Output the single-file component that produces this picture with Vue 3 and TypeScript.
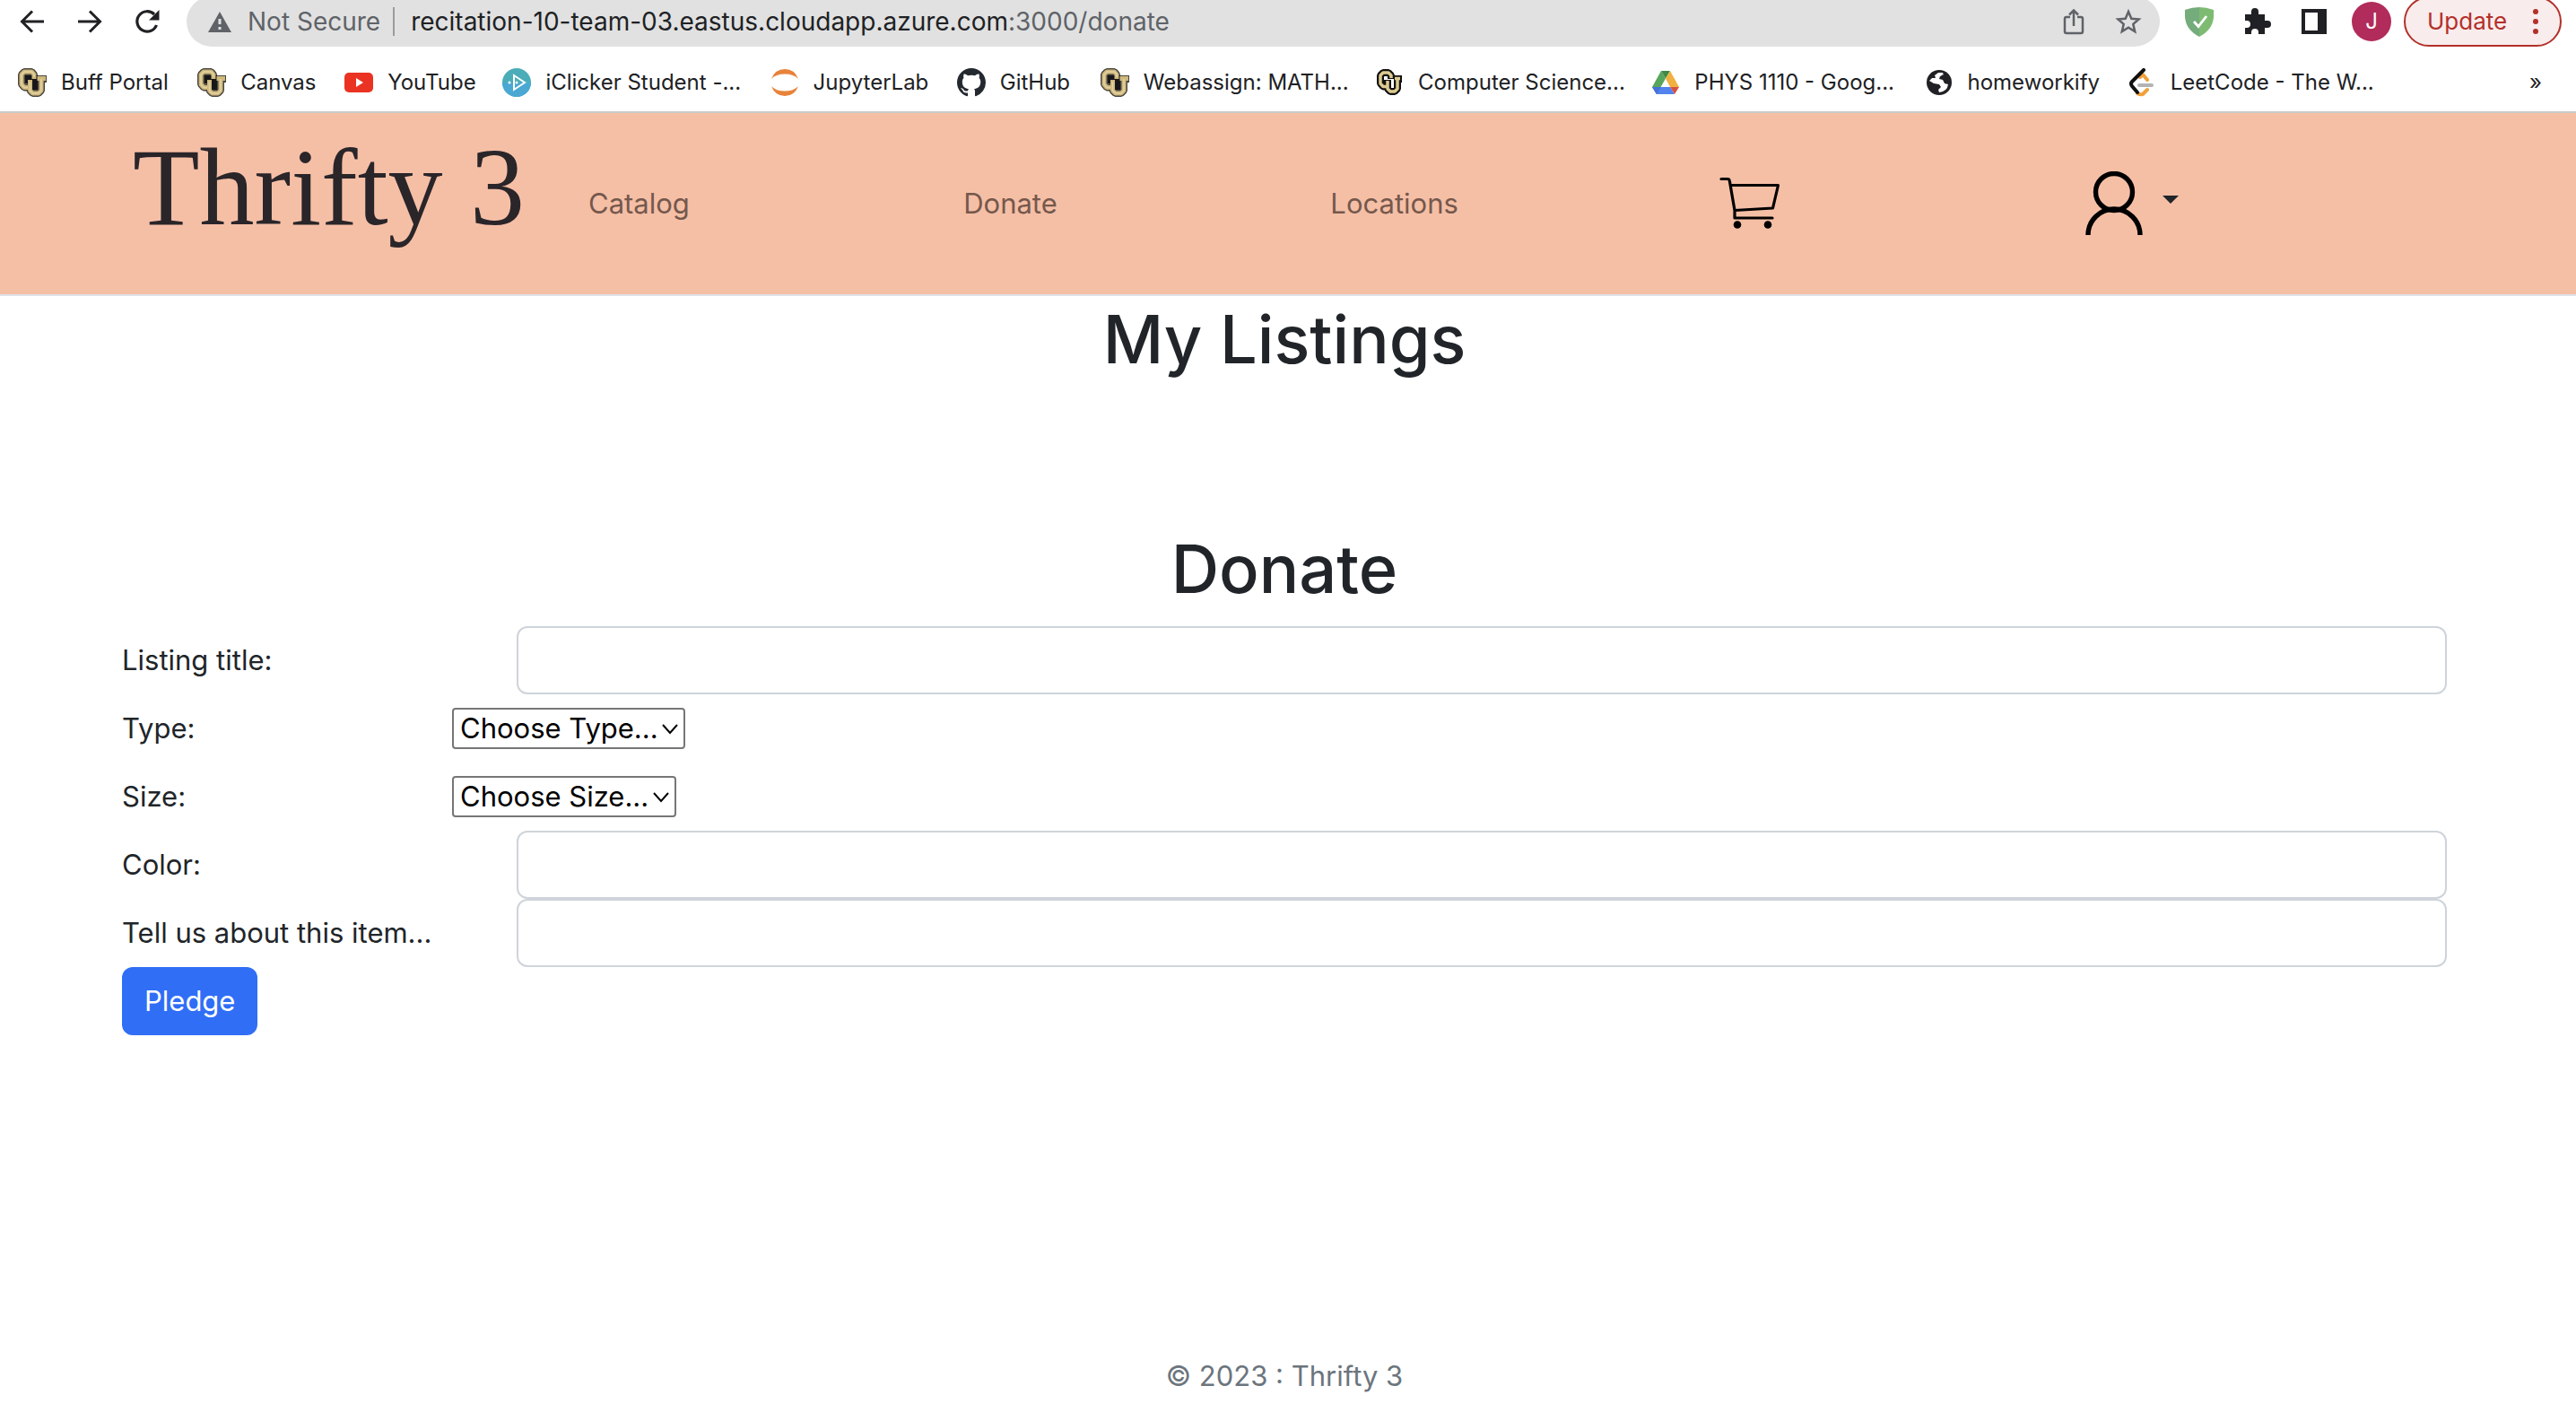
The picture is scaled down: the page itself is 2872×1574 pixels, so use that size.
<script setup lang="ts">
import { ref } from 'vue'

interface Bookmark {
  icon: string
  label: string
  span: number
}

const bookmarks: Bookmark[] = [
  { icon: 'cu', label: 'Buff Portal', span: 200 },
  { icon: 'cu', label: 'Canvas', span: 164 },
  { icon: 'youtube', label: 'YouTube', span: 176 },
  { icon: 'iclicker', label: 'iClicker Student -...', span: 298 },
  { icon: 'jupyter', label: 'JupyterLab', span: 208 },
  { icon: 'github', label: 'GitHub', span: 160 },
  { icon: 'cu', label: 'Webassign: MATH...', span: 306 },
  { icon: 'cu-dark', label: 'Computer Science...', span: 308 },
  { icon: 'drive', label: 'PHYS 1110 - Goog...', span: 304 },
  { icon: 'globe', label: 'homeworkify', span: 226 },
  { icon: 'leetcode', label: 'LeetCode - The W...', span: 448 },
]
const bookmarkColumns = bookmarks.map((b) => `${b.span}fr`).join(' ')

const title = ref('')
const type = ref('')
const size = ref('')
const color = ref('')
const about = ref('')
</script>

<template>
  <div class="window">
    <div class="toolbar">
      <div class="history">
        <button type="button" aria-label="Back">
          <svg width="28" height="28" viewBox="0 0 28 28" fill="none" stroke="#202124" stroke-width="3"><path d="M27 14H3M14 2.500L2.500 14L14 25.500" /></svg>
        </button>
        <button type="button" aria-label="Forward">
          <svg width="28" height="28" viewBox="0 0 28 28" fill="none" stroke="#202124" stroke-width="3"><path d="M1 14H25M14 2.500L25.500 14L14 25.500" /></svg>
        </button>
        <button type="button" aria-label="Reload">
          <svg width="28" height="28" viewBox="0 0 28 28"><path d="M24.500 18A11.200 11.200 0 1 1 22 6" fill="none" stroke="#202124" stroke-width="3.200" /><path d="M27.500 1V12.500H16Z" fill="#202124" /></svg>
        </button>
      </div>
      <div class="address">
        <svg class="warn" width="26" height="24" viewBox="0 0 26 24"><path d="M13 1L26 24H0Z" fill="#5f6368" /><path d="M13 9V15M13 18V21" stroke="#e1e1e1" stroke-width="3" /></svg>
        <span class="insecure">Not Secure</span>
        <span class="rule"></span>
        <span class="url">recitation-10-team-03.eastus.cloudapp.azure.com<span class="path">:3000/donate</span></span>
        <button type="button" aria-label="Share" class="share">
          <svg width="24" height="30" viewBox="0 0 24 30" fill="none" stroke="#5f6368" stroke-width="2.500"><path d="M8 10H4Q2 10 2 12V26Q2 28 4 28H20Q22 28 22 26V12Q22 10 20 10H16M12 20V3M7 7.500L12 2.500L17 7.500" /></svg>
        </button>
        <button type="button" aria-label="Bookmark this page">
          <svg width="30" height="30" viewBox="0 0 30 30" fill="none" stroke="#5f6368" stroke-width="2.500"><path d="M15 4L18.300 11.700L26.600 12.400L20.300 17.900L22.200 26.100L15 21.700L7.800 26.100L9.700 17.900L3.400 12.400L11.700 11.700Z" /></svg>
        </button>
      </div>
      <div class="extensions">
        <svg width="32" height="34" viewBox="0 0 32 34"><path d="M16 1Q8 1 0 4V12Q1 26 16 34Z" fill="#74ac7c" /><path d="M16 1Q24 1 32 4V12Q31 26 16 34Z" fill="#7dbb72" /><path d="M10 17L15 22.500L24 11" fill="none" stroke="#fff" stroke-width="2.800" /></svg>
        <svg width="30" height="30" viewBox="0 0 30 30"><path d="M2 7H8V4A4 4 0 0 1 16 4V7H23V14H26A4 4 0 0 1 26 22H23V29H16V27A4 4 0 0 0 8 27V29H1V22H3A4 4 0 0 0 3 14H1V7Z" fill="#202124" /></svg>
        <svg width="28" height="28" viewBox="0 0 28 28"><path d="M0 0H28V28H0ZM4 4V24H18V4Z" fill="#202124" fill-rule="evenodd" /></svg>
      </div>
      <button type="button" class="avatar" aria-label="Profile J">J</button>
      <button type="button" class="update">
        <span>Update</span>
        <svg width="6" height="28" viewBox="0 0 6 28" fill="#b3302a"><circle cx="3" cy="3" r="3" /><circle cx="3" cy="14" r="3" /><circle cx="3" cy="25" r="3" /></svg>
      </button>
    </div>

    <div class="bookmarks">
      <nav class="bookmark-list" :style="{ gridTemplateColumns: bookmarkColumns }" aria-label="Bookmarks">
        <a v-for="b in bookmarks" :key="b.label" href="#">
          <svg width="32" height="32" viewBox="0 0 32 32">
            <g v-if="b.icon === 'cu'" fill="none" stroke-linejoin="bevel">
              <path d="M18 13V7L15.500 4H7L4 7V18L7 21.500H13" stroke="#4a463e" stroke-width="8" />
              <path d="M13.500 12V25L16.500 28H23L26 25V8M10 12H17M20 12H32" stroke="#4a463e" stroke-width="8" />
              <path d="M8 8H22V24H15V17H8Z" fill="#17171a" />
              <path d="M18 12V7L15.500 4H7L4 7V18L7 21.500H12" stroke="#cfb87c" stroke-width="5" />
              <path d="M13.500 13V25L16.500 28H23L26 25V11M21.500 11.500H31" stroke="#cfb87c" stroke-width="5" />
              <path d="M18 10V7L15.500 4H7L4 7V18L7 21.500H11M13.500 15V25L16.500 28H23L26 25V12" stroke="#e2d3a4" stroke-width="1.500" />
            </g>
            <g v-else-if="b.icon === 'cu-dark'" fill="none" stroke-linejoin="bevel">
              <path d="M18 12V8L15 5H9L6 8V17L9 20.500H14M14 13V23L17 26H22L25 23V9M21 12H30" stroke="#111" stroke-width="8" />
              <path d="M18 11V8L15 5H9L6 8V17L9 20.500H13M14 14V23L17 26H22L25 23V12M22 11.500H28" stroke="#dcca90" stroke-width="3.500" />
            </g>
            <g v-else-if="b.icon === 'youtube'">
              <rect y="5" width="32" height="22" rx="5" fill="#ea3323" /><path d="M13 11V21L21 16Z" fill="#fff" />
            </g>
            <g v-else-if="b.icon === 'iclicker'">
              <circle cx="16" cy="16" r="16" fill="#4badb8" /><path d="M0 16A16 16 0 0 0 32 16Z" fill="#4aa8d3" />
              <path d="M13 8V24L25 16Z" fill="none" stroke="#fff" stroke-width="2" /><circle cx="8" cy="16" r="1.500" fill="#fff" /><circle cx="16" cy="16" r="1.500" fill="#fff" />
            </g>
            <g v-else-if="b.icon === 'jupyter'" fill="#e8833a">
              <path d="M1 12Q5 1 16 1T31 12Q26 6.500 16 6.500T1 12Z" /><path d="M1 20Q5 31 16 31T31 20Q26 25.500 16 25.500T1 20Z" />
            </g>
            <path v-else-if="b.icon === 'github'" fill="#24292f" transform="scale(2)" d="M8 0C3.580 0 0 3.580 0 8c0 3.540 2.290 6.530 5.470 7.590.4.070.55-.17.55-.38 0-.19-.01-.82-.01-1.490-2.010.37-2.530-.49-2.690-.94-.09-.23-.48-.94-.82-1.130-.28-.15-.68-.52-.01-.53.63-.01 1.080.58 1.230.82.72 1.210 1.870.87 2.330.66.07-.52.28-.87.51-1.070-1.780-.2-3.640-.89-3.640-3.950 0-.87.31-1.590.82-2.150-.08-.2-.36-1.020.08-2.120 0 0 .67-.21 2.200.82.64-.18 1.320-.27 2-.27s1.360.09 2 .27c1.530-1.040 2.200-.82 2.200-.82.44 1.100.16 1.920.08 2.120.51.56.82 1.270.82 2.150 0 3.070-1.870 3.750-3.650 3.950.29.25.54.73.54 1.480 0 1.070-.01 1.930-.01 2.200 0 .21.15.46.55.38A8.010 8.010 0 0 0 16 8c0-4.420-3.580-8-8-8z" />
            <g v-else-if="b.icon === 'drive'">
              <path d="M11 3L16 11.500L6 29L1 21Z" fill="#58a55c" /><path d="M11 3H21L16 11.500Z" fill="#3f8a46" />
              <path d="M21 3L31 21H21L16 11.500Z" fill="#f1b140" /><path d="M1 21H21V29H6Z" fill="#5383ec" /><path d="M1 21H11L6 29Z" fill="#4571d8" /><path d="M21 21H31L26 29Z" fill="#d95040" /><path d="M21 21L26 29H19Z" fill="#5383ec" />
            </g>
            <g v-else-if="b.icon === 'globe'">
              <circle cx="16" cy="16" r="14" fill="#202124" />
              <path d="M5 14L10 17L16 18L18 21L15 24L16 27Q25 26 26 18L22 17L20 13L16 12L17 9L21 8L20 5L15 5L11 8L12 11L8 11Z" fill="#fff" /><path d="M17 10L21 12L24 10L20 7Z" fill="#202124" />
            </g>
            <g v-else fill="none" stroke-linecap="round" stroke-linejoin="round" stroke-width="4">
              <path d="M14 10L17 7L22 13M22 24L17 29Q14 30 11 28" stroke="#f0a13b" /><path d="M13 19H27" stroke="#b3b3b3" /><path d="M18 2L5 15Q3 17 5 20L11 27" stroke="#111" />
            </g>
          </svg>
          <span>{{ b.label }}</span>
        </a>
      </nav>
      <button type="button" class="more" aria-label="More bookmarks">»</button>
    </div>

    <header class="site-header">
      <a class="brand" href="#">Thrifty 3</a>
      <nav class="site-nav" aria-label="Main">
        <a href="#">Catalog</a>
        <a href="#">Donate</a>
        <a href="#">Locations</a>
        <a href="#" aria-label="Cart">
          <svg width="68" height="60" viewBox="1917 199 68 60" fill="none" stroke="#000" stroke-width="3.200" stroke-linecap="round" stroke-linejoin="round">
            <path d="M1919 201.500H1926Q1928 201.500 1928.300 203.500L1934 236.500V245H1976M1930 208.500H1982.500L1976.500 234L1934 236.500" />
            <circle cx="1937" cy="252.500" r="4.300" fill="#000" stroke="none" /><circle cx="1971" cy="252.500" r="4.300" fill="#000" stroke="none" />
          </svg>
        </a>
        <button type="button" class="account" aria-label="Account">
          <svg width="64" height="72" viewBox="0 0 64 72" fill="none" stroke="#000" stroke-width="5.400"><ellipse cx="32" cy="23" rx="20.500" ry="20.500" /><path d="M3 71A29 29 0 0 1 61 71" /></svg>
          <svg class="caret" width="18" height="10" viewBox="0 0 18 10"><path d="M0 0H18L9 9Z" fill="#212529" /></svg>
        </button>
      </nav>
    </header>

    <main>
      <h1>My Listings</h1>
      <section class="donate">
        <h1>Donate</h1>
        <form @submit.prevent>
          <div class="row">
            <label for="title">Listing title:</label>
            <input id="title" v-model="title" type="text" />
          </div>
          <div class="row pick">
            <label for="type">Type:</label>
            <div class="select">
              <select id="type" v-model="type">
                <option value="">Choose Type...</option>
              </select>
              <svg width="18" height="12" viewBox="0 0 18 12" fill="none" stroke="#000" stroke-width="2"><path d="M1 1L9 10L17 1" /></svg>
            </div>
          </div>
          <div class="row pick">
            <label for="size">Size:</label>
            <div class="select">
              <select id="size" v-model="size">
                <option value="">Choose Size...</option>
              </select>
              <svg width="18" height="12" viewBox="0 0 18 12" fill="none" stroke="#000" stroke-width="2"><path d="M1 1L9 10L17 1" /></svg>
            </div>
          </div>
          <div class="row">
            <label for="color">Color:</label>
            <input id="color" v-model="color" type="text" />
          </div>
          <div class="row">
            <label for="about">Tell us about this item...</label>
            <input id="about" v-model="about" type="text" />
          </div>
          <button type="submit" class="pledge">Pledge</button>
        </form>
      </section>
    </main>

    <footer>© 2023 : Thrifty 3</footer>
  </div>
</template>

<style>
body {
  margin: 0;
  background: #fff;
}
</style>

<style scoped>
.window {
  display: flex;
  flex-direction: column;
  min-height: 100vh;
  overflow: hidden;
  font-family: Inter, "Liberation Sans", sans-serif;
  font-size: 31px;
  line-height: 48px;
  color: #212529;
}
* {
  box-sizing: border-box;
}
svg {
  display: block;
  flex: none;
}
button {
  padding: 0;
  border: 0;
  background: none;
  font: inherit;
  color: inherit;
}
a {
  color: inherit;
  text-decoration: none;
}
.toolbar {
  display: flex;
  align-items: center;
  height: 56px;
  margin-top: -4px;
  padding: 0 16px 0 22px;
  font-size: 28px;
}
.history {
  display: flex;
  gap: 36px;
  margin-right: 30px;
}
.address {
  flex: 1;
  display: flex;
  align-items: center;
  height: 56px;
  padding: 0 20px 0 24px;
  border-radius: 28px;
  background: #e1e1e1;
  color: #202124;
}
.insecure {
  margin-left: 18px;
  color: #5f6368;
}
.rule {
  width: 2px;
  height: 32px;
  margin: 0 18px 0 14px;
  background: #9a9b9d;
}
.url {
  flex: 1;
}
.path {
  color: #5f6368;
}
.share {
  margin-right: 34px;
}
.extensions {
  display: flex;
  align-items: center;
  gap: 34px;
  margin: 0 28px;
}
.avatar {
  width: 44px;
  height: 44px;
  border-radius: 50%;
  background: #b12c5a;
  color: #fff;
  font-size: 24px;
  line-height: 44px;
}
.update {
  display: flex;
  align-items: center;
  justify-content: space-between;
  width: 176px;
  height: 56px;
  margin-left: 14px;
  padding: 0 24px;
  border: 2px solid #b3302a;
  border-radius: 28px;
  background: #f8ecec;
  color: #b3302a;
  font-size: 26px;
}
.bookmarks {
  display: flex;
  align-items: center;
  height: 74px;
  padding: 8px 38px 0 20px;
  border-bottom: 2px solid #c9cbca;
  font-size: 24px;
  line-height: 32px;
  color: #202124;
}
.bookmark-list {
  flex: 1;
  display: grid;
}
.bookmark-list a {
  display: flex;
  align-items: center;
  gap: 16px;
  min-width: 0;
  white-space: nowrap;
}
.site-header {
  display: flex;
  align-items: center;
  height: 204px;
  padding-left: 148px;
  border-bottom: 2px solid #dee2e6;
  background: #f5bfa6;
}
.brand {
  width: 508px;
  padding-bottom: 36px;
  font-family: "Liberation Serif", serif;
  font-size: 122px;
  line-height: 140px;
  color: #2a2529;
  white-space: nowrap;
}
.site-nav {
  flex: 1;
  display: grid;
  grid-template-columns: 418fr 409fr 433fr 408fr 547fr;
  align-items: center;
  color: #75584c;
}
.account {
  display: flex;
  align-items: center;
  gap: 22px;
}
.caret {
  margin-bottom: 8px;
}
main {
  padding: 0 144px 0 136px;
}
h1 {
  margin: 0 0 16px;
  font-size: 74px;
  font-weight: 500;
  line-height: 96px;
  text-align: center;
}
.donate {
  margin-top: 160px;
}
.row {
  display: grid;
  grid-template-columns: 440fr 2152fr;
  align-items: center;
  height: 76px;
}
.pick {
  grid-template-columns: 368fr 2224fr;
}
input {
  width: 100%;
  height: 76px;
  padding: 12px 24px;
  border: 2px solid #ced4da;
  border-radius: 12px;
  background: #fff;
  font: inherit;
  color: inherit;
}
.select {
  position: relative;
  justify-self: start;
}
.select svg {
  position: absolute;
  right: 8px;
  top: 18px;
  pointer-events: none;
}
select {
  display: block;
  height: 46px;
  padding: 0 28px 0 7px;
  border: 2px solid #767676;
  border-radius: 4px;
  appearance: none;
  background: #fff;
  font: inherit;
  line-height: 42px;
  color: #000;
}
.pledge {
  display: block;
  height: 76px;
  padding: 0 25px;
  border-radius: 12px;
  background: #306ef6;
  color: #fff;
}
footer {
  margin-top: auto;
  padding: 0 144px 16px 136px;
  text-align: center;
  color: #6c757d;
}
</style>
